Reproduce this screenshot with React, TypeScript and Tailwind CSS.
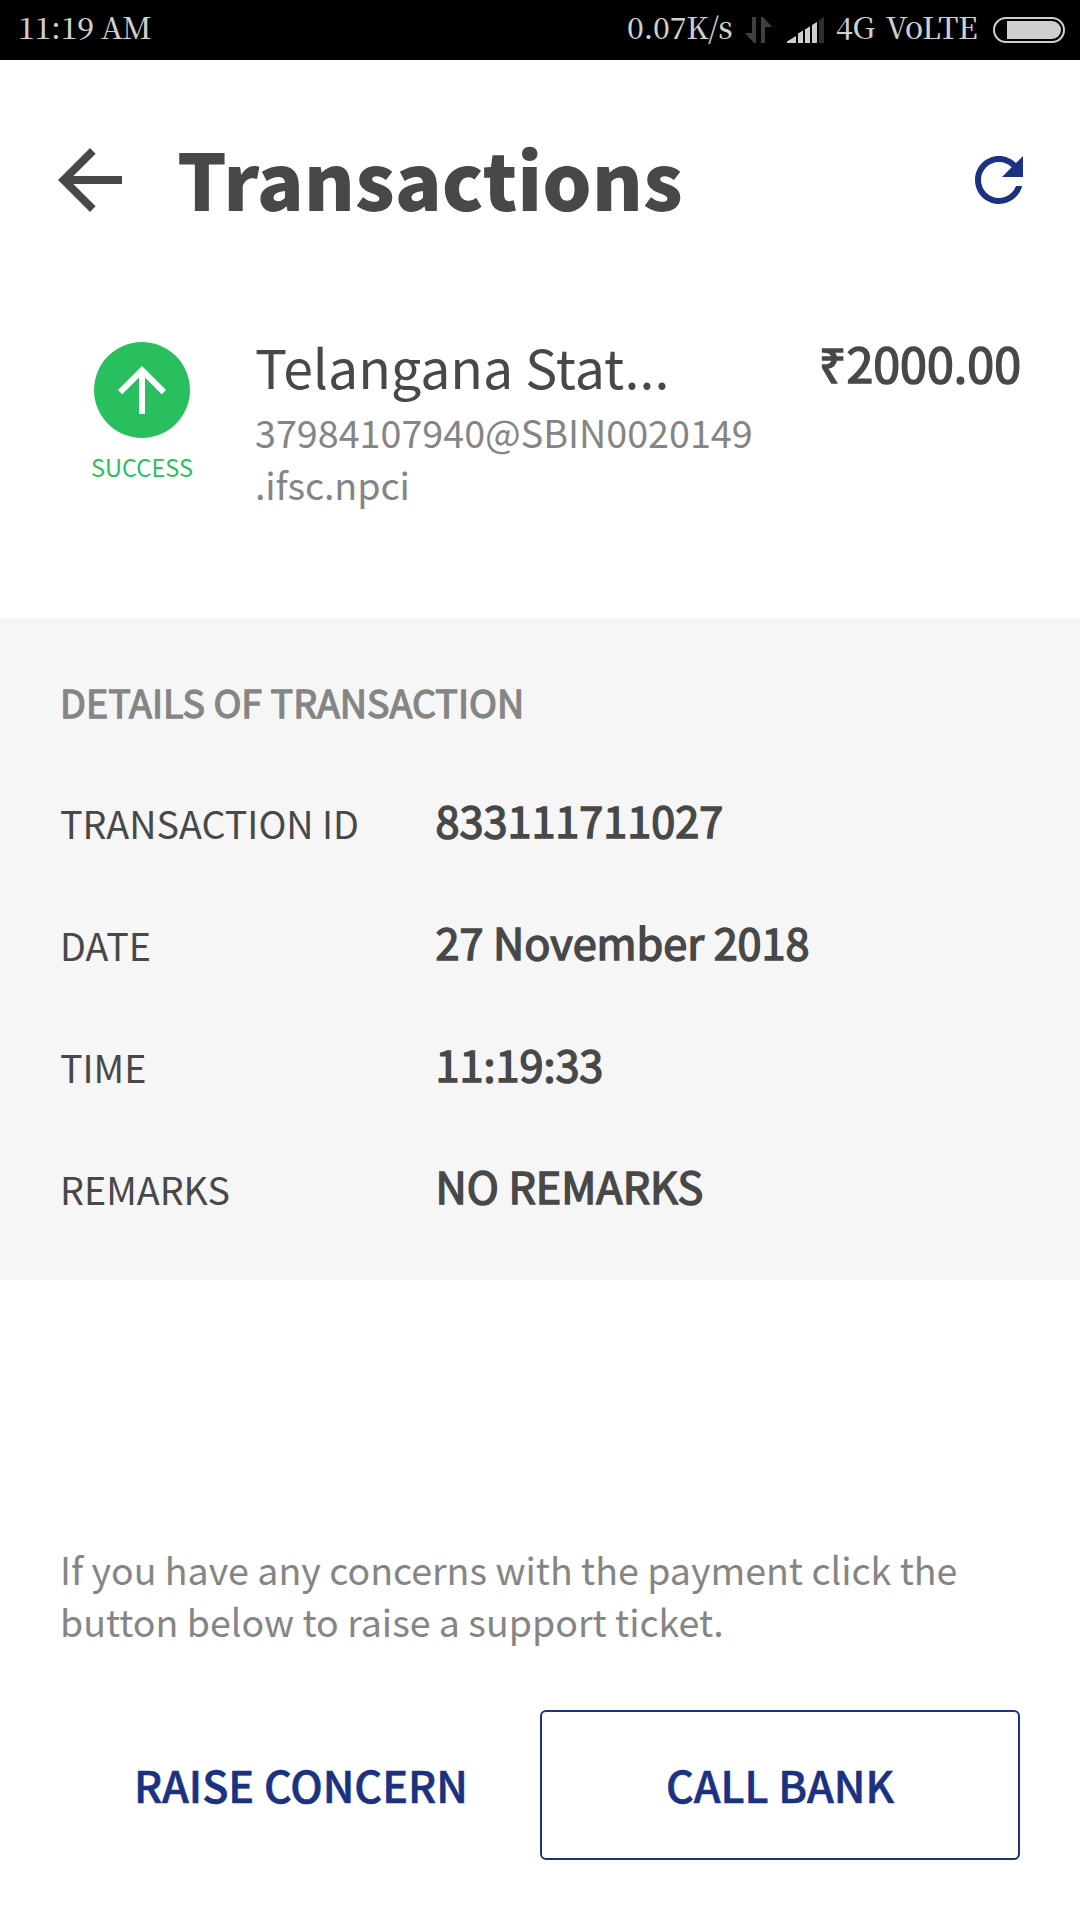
import React from 'react';

const ARROW_BACK = 'M20 11H7.83l5.59-5.59L12 4l-8 8 8 8 1.41-1.41L7.83 13H20v-2z';
const ARROW_UP = 'M4 12l1.41 1.41L11 7.83V20h2V7.83l5.58 5.59L20 12l-8-8-8 8z';
const REFRESH =
  'M17.65 6.35C16.2 4.9 14.21 4 12 4c-4.42 0-7.99 3.58-7.99 8s3.57 8 7.99 8c3.73 0 6.84-2.55 7.73-6h-2.08c-.82 2.33-3.04 4-5.65 4-3.31 0-6-2.69-6-6s2.69-6 6-6c1.66 0 3.14.69 4.22 1.78L13 11h7V4l-2.35 2.35z';

function Icon({ d, className }: { d: string; className: string }) {
  return (
    <svg viewBox="0 0 24 24" fill="currentColor" aria-hidden="true" className={className}>
      <path d={d} />
    </svg>
  );
}

function StatusBar() {
  return (
    <div className="flex h-[60px] shrink-0 items-center justify-between bg-black pl-[18px] pr-[15px] font-['Noto_Serif_CJK_SC','Liberation_Serif',serif] text-[30px] leading-[52px] font-medium tracking-[-0.3px] text-[#cfcfcf]">
      <span className="pb-2 whitespace-nowrap">11:19 AM</span>
      <div className="flex items-center">
        <span className="w-[118px] pb-2 whitespace-nowrap">0.07K/s</span>
        <svg width="27" height="26" viewBox="0 0 27 26" fill="#404040" aria-hidden="true">
          <path d="M7 0h4v26H9L0 16h7z" />
          <path d="M16 26V0h2l9 10h-7v16z" />
        </svg>
        <svg width="37" height="26" viewBox="0 0 37 26" fill="#cfcfcf" aria-hidden="true" className="ml-[15px]">
          <path d="M0 26v-1.5L9 19v7z" />
          <path d="M11 26v-9.5l5-3V26z" />
          <path d="M18 26V12.5l5-3.2V26z" />
          <path d="M25 26V8l5-3v21z" />
          <path d="M32 26V3.5L37 0v26z" fill="#2e2e2e" />
        </svg>
        <span className="ml-3 w-[50px] pb-2 whitespace-nowrap">4G</span>
        <span className="w-[107px] pb-2 whitespace-nowrap">VoLTE</span>
        <svg width="72" height="26" viewBox="0 0 72 26" aria-hidden="true">
          <rect x="1" y="1" width="70" height="24" rx="12" fill="none" stroke="#cfcfcf" strokeWidth="2" />
          <path d="M14 4h45a9 9 0 0 1 0 18H14z" fill="#cfcfcf" />
        </svg>
      </div>
    </div>
  );
}

const DETAILS = [
  { label: 'TRANSACTION ID', value: '833111711027' },
  { label: 'DATE', value: '27 November 2018' },
  { label: 'TIME', value: '11:19:33' },
  { label: 'REMARKS', value: 'NO REMARKS' },
];

export default function App() {
  return (
    <div className="flex h-[1920px] w-[1080px] flex-col overflow-hidden bg-white font-['Noto_Sans_CJK_SC','Noto_Sans',sans-serif] text-[#484848]">
      <StatusBar />

      <header className="flex h-[240px] shrink-0 items-center pr-[45px] pl-[42px]">
        <Icon d={ARROW_BACK} className="size-24" />
        <h1 className="ml-[39px] flex-1 pb-1.5 text-[77.8px] leading-[120px] font-black">Transactions</h1>
        <Icon d={REFRESH} className="size-[72px] text-[#1b3281]" />
      </header>

      <section className="flex h-[318px] shrink-0 items-start pr-[59px] pl-[82px]">
        <div className="mt-[42px] flex w-[120px] flex-col items-center text-[#2abf5e]">
          <div className="flex size-24 items-center justify-center rounded-full bg-[#2abf5e] text-white">
            <Icon d={ARROW_UP} className="size-[72px]" />
          </div>
          <span className="mt-[13px] text-[23.6px] leading-8">SUCCESS</span>
        </div>
        <div className="mt-[30px] ml-[53px] flex-1">
          <p className="text-[53.6px] leading-[72px]">Telangana Stat...</p>
          <p className="mt-1 text-[37.7px] leading-[52px] text-[#858585]">
            37984107940@SBIN0020149
            <br />
            <span className="tracking-[-0.15px]">.ifsc.npci</span>
          </p>
        </div>
        <p className="mt-[26px] text-[48.4px] leading-[72px] [-webkit-text-stroke:1.5px_#484848]">₹2000.00</p>
      </section>

      <section className="h-[662px] shrink-0 bg-[#f6f6f6] px-[60px] pt-[60px]">
        <h2 className="text-[37.7px] leading-[48px] text-[#858585] [-webkit-text-stroke:1.3px_#858585]">
          DETAILS OF TRANSACTION
        </h2>
        <dl className="mt-[63px] flex flex-col gap-[62px]">
          {DETAILS.map(({ label, value }) => (
            <div key={label} className="flex h-[60px] items-start">
              <dt className="mt-2 w-[375.5px] text-[37.7px] leading-[52px]">{label}</dt>
              <dd className="text-[43.2px] leading-[60px] [-webkit-text-stroke:1.5px_#484848]">{value}</dd>
            </div>
          ))}
        </dl>
      </section>

      <footer className="mt-[263px] px-[60px]">
        <p className="text-[37.5px] leading-[52px] text-[#858585]">
          If you have any concerns with the payment click the
          <br />
          button below to raise a support ticket.
        </p>
        <div className="mt-[63px] grid h-[150px] grid-cols-2 text-[43.1px] font-medium text-[#1b3281] [-webkit-text-stroke:0.6px_#1b3281]">
          <button className="pb-0.5 pl-0.5">RAISE CONCERN</button>
          <button className="rounded-md border-2 border-[#1b3281] pb-0.5">CALL BANK</button>
        </div>
      </footer>
    </div>
  );
}
